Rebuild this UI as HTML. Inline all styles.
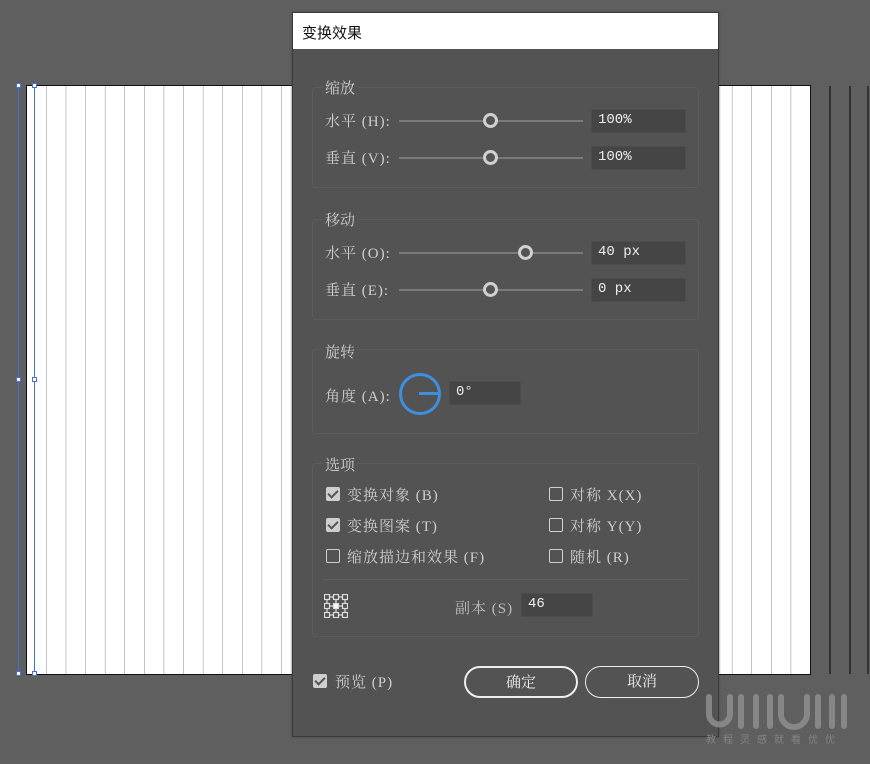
<!DOCTYPE html>
<html><head><meta charset="utf-8"><style>
*{margin:0;padding:0;box-sizing:border-box}
body{width:870px;height:764px;background:#5f5f5f;position:relative;overflow:hidden;font-family:"Liberation Serif","Noto Serif CJK SC",serif;color:#d6d6d6}
.a{position:absolute}
.board{left:26px;top:85px;width:785px;height:590px;background:#fff;border:1px solid #111;
background-image:repeating-linear-gradient(90deg,transparent 0,transparent 19px,#888 19px,#888 20.4px);background-position:0 0;background-size:19.6px 100%}
.dl{position:absolute;top:86px;height:588px;width:1.5px;background:#333}
.dlg{left:292px;top:12px;width:427px;height:725px;background:#535353;border:1px solid #3a3a3a;box-shadow:0 0 2px #444}
.title{left:0;top:0;width:100%;height:36px;background:#fff;color:#111;font-family:"Liberation Sans","Noto Sans CJK SC",sans-serif;font-size:15px;padding:9px 9px}
.box{position:absolute;border:1px solid #5c5c5c;border-radius:4px;left:19px;width:387px}
.lg{position:absolute;font-size:15px;color:#cfcfcf}
.lbl{position:absolute;font-size:15px;color:#cfcfcf;letter-spacing:1px}
.track{position:absolute;height:2px;background:#7a7a7a;width:184px}
.knob{position:absolute;width:15px;height:15px;border-radius:50%;border:3px solid #d0d0d0;background:#535353}
.inp{position:absolute;width:95px;height:24px;background:#454545;border:1px solid #4c4c4c;border-radius:2px;color:#eee;font-size:14px;padding:2px 6px;font-family:"Liberation Mono","Noto Sans CJK SC",monospace}
.cb{position:absolute;width:14px;height:14px;border:1px solid #d0d0d0;border-radius:2px}
.cb.on{background:#cfcfcf}
.cb.on:after{content:"";position:absolute;left:3px;top:0px;width:4px;height:8px;border:solid #555;border-width:0 2px 2px 0;transform:rotate(45deg)}
.btn{position:absolute;top:653px;height:32px;border:2px solid #eee;border-radius:16px;text-align:center;color:#eee;font-size:15px;line-height:30px}
</style></head><body>
<div class="a board"></div>
<div class="dl" style="left:829px"></div><div class="dl" style="left:849px"></div><div class="dl" style="left:867px"></div>
<div class="a" style="left:18px;top:86px;width:1px;height:588px;background:#4a6fd0"></div>
<div class="a" style="left:34px;top:86px;width:1px;height:588px;background:#4a6fd0"></div>
<div class="a" style="left:16px;top:83px;width:5px;height:5px;background:#fff;border:1px solid #4a6fd0"></div>
<div class="a" style="left:32px;top:83px;width:5px;height:5px;background:#fff;border:1px solid #4a6fd0"></div>
<div class="a" style="left:16px;top:377px;width:5px;height:5px;background:#fff;border:1px solid #4a6fd0"></div>
<div class="a" style="left:32px;top:377px;width:5px;height:5px;background:#fff;border:1px solid #4a6fd0"></div>
<div class="a" style="left:16px;top:671px;width:5px;height:5px;background:#fff;border:1px solid #4a6fd0"></div>
<div class="a" style="left:32px;top:671px;width:5px;height:5px;background:#fff;border:1px solid #4a6fd0"></div>

<div class="a dlg">
<div class="a title">变换效果</div>
<div class="box" style="top:74px;height:101px"></div>
<div class="lg" style="left:30px;top:64px;background:#535353;padding:0 2px">缩放</div>
<div class="lbl" style="left:32px;top:97px">水平 (H):</div>
<div class="track" style="left:106px;top:107px"></div><div class="knob" style="left:190px;top:100px"></div>
<div class="inp" style="left:298px;top:96px">100%</div>
<div class="lbl" style="left:32px;top:134px">垂直 (V):</div>
<div class="track" style="left:106px;top:144px"></div><div class="knob" style="left:190px;top:137px"></div>
<div class="inp" style="left:298px;top:133px">100%</div>

<div class="box" style="top:206px;height:101px"></div>
<div class="lg" style="left:30px;top:196px;background:#535353;padding:0 2px">移动</div>
<div class="lbl" style="left:32px;top:229px">水平 (O):</div>
<div class="track" style="left:106px;top:239px"></div><div class="knob" style="left:225px;top:232px"></div>
<div class="inp" style="left:298px;top:228px">40 px</div>
<div class="lbl" style="left:32px;top:266px">垂直 (E):</div>
<div class="track" style="left:106px;top:276px"></div><div class="knob" style="left:190px;top:269px"></div>
<div class="inp" style="left:298px;top:265px">0 px</div>

<div class="box" style="top:336px;height:85px"></div>
<div class="lg" style="left:30px;top:328px;background:#535353;padding:0 2px">旋转</div>
<div class="lbl" style="left:32px;top:372px">角度 (A):</div>
<div class="a" style="left:106px;top:360px;width:42px;height:42px;border:3px solid #3f8fe0;border-radius:50%"></div>
<div class="a" style="left:126px;top:379px;width:20px;height:3px;background:#3f8fe0"></div>
<div class="inp" style="left:156px;top:368px;width:72px">0°</div>

<div class="box" style="top:450px;height:174px"></div>
<div class="lg" style="left:30px;top:441px;background:#535353;padding:0 2px">选项</div>
<div class="cb on" style="left:33px;top:474px"></div><div class="lbl" style="left:54px;top:471px">变换对象 (B)</div>
<div class="cb on" style="left:33px;top:505px"></div><div class="lbl" style="left:54px;top:502px">变换图案 (T)</div>
<div class="cb" style="left:33px;top:536px"></div><div class="lbl" style="left:54px;top:533px">缩放描边和效果 (F)</div>
<div class="cb" style="left:256px;top:474px"></div><div class="lbl" style="left:277px;top:471px">对称 X(X)</div>
<div class="cb" style="left:256px;top:505px"></div><div class="lbl" style="left:277px;top:502px">对称 Y(Y)</div>
<div class="cb" style="left:256px;top:536px"></div><div class="lbl" style="left:277px;top:533px">随机 (R)</div>
<div class="a" style="left:30px;top:566px;width:366px;height:1px;background:#5e5e5e"></div>
<svg class="a" style="left:31px;top:581px" width="24" height="24" viewBox="0 0 24 24" fill="none" stroke="#ddd" stroke-width="1.2">
<rect x="0.5" y="0.5" width="5" height="5"/><rect x="9.5" y="0.5" width="5" height="5"/><rect x="18.5" y="0.5" width="5" height="5"/>
<rect x="0.5" y="9.5" width="5" height="5"/><rect x="9.5" y="9.5" width="5" height="5" fill="#fff"/><rect x="18.5" y="9.5" width="5" height="5"/>
<rect x="0.5" y="18.5" width="5" height="5"/><rect x="9.5" y="18.5" width="5" height="5"/><rect x="18.5" y="18.5" width="5" height="5"/>
<path d="M6 3h3M15 3h3M6 12h3M15 12h3M6 21h3M15 21h3M3 6v3M3 15v3M12 6v3M12 15v3M21 6v3M21 15v3"/></svg>
<div class="lbl" style="left:162px;top:584px;color:#bbb">副本 (S)</div>
<div class="inp" style="left:228px;top:580px;width:72px">46</div>

<div class="cb on" style="left:20px;top:661px"></div><div class="lbl" style="left:42px;top:658px">预览 (P)</div>
<div class="btn" style="left:171px;width:114px">确定</div>
<div class="btn" style="left:292px;width:114px;border-width:1.5px">取消</div>
</div>

<svg class="a" style="left:700px;top:690px;opacity:0.85" width="160" height="45" viewBox="0 0 160 45" fill="none" stroke="#8e8e8e" stroke-width="6" stroke-linecap="round">
<path d="M9 7v17a10.5 10.5 0 0 0 21 0V7"/><path d="M41 7v29M56 7v29M70 7v29"/>
<path d="M81 7v17a13 13 0 0 0 26 0V7"/><path d="M118 7v29M132 7v29M144 7v29"/></svg>
<div class="a" style="left:706px;top:731px;font-size:10px;color:#858585;letter-spacing:7px;font-family:'Noto Sans CJK SC',sans-serif">教程灵感就看优优</div>
</body></html>
